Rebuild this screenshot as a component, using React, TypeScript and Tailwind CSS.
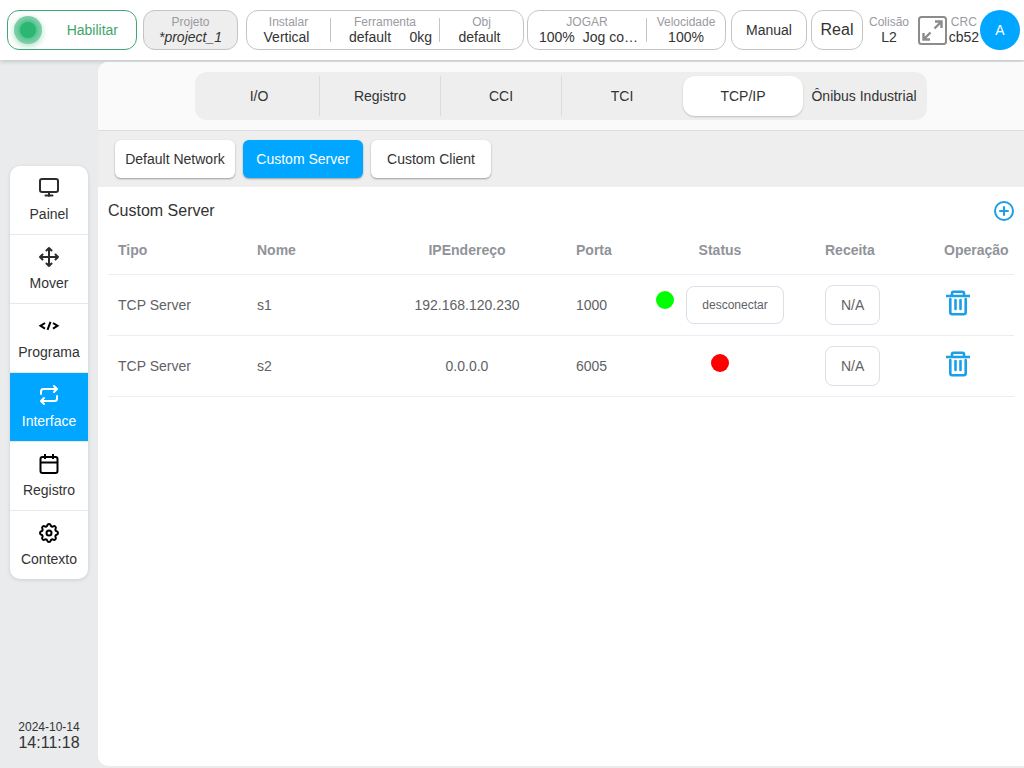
import clsx from 'clsx';

type MenuItem = {
  label: string;
  icon: React.ReactNode;
  active?: boolean;
};

type ServerRow = {
  type: string;
  name: string;
  ip: string;
  port: number;
  connected: boolean;
};

const menu: MenuItem[] = [
  { label: 'Painel', icon: <IconMonitor /> },
  { label: 'Mover', icon: <IconMove /> },
  { label: 'Programa', icon: <IconCode /> },
  { label: 'Interface', icon: <IconRepeat />, active: true },
  { label: 'Registro', icon: <IconCalendar /> },
  { label: 'Contexto', icon: <IconGear /> },
];

const tabs = ['I/O', 'Registro', 'CCI', 'TCI', 'TCP/IP', 'Ônibus Industrial'];
const networks = ['Default Network', 'Custom Server', 'Custom Client'];

const servers: ServerRow[] = [
  { type: 'TCP Server', name: 's1', ip: '192.168.120.230', port: 1000, connected: true },
  { type: 'TCP Server', name: 's2', ip: '0.0.0.0', port: 6005, connected: false },
];

export default function App() {
  return (
    <div className="flex min-h-screen flex-col bg-[#e9ebed] font-['Liberation_Sans',Arial,sans-serif] text-sm text-[#333]">
      <Header />

      <div className="flex flex-1 pt-0.5">
        <Sidebar />

        <main className="mb-0.5 flex min-w-0 flex-1 flex-col overflow-hidden rounded-l-[10px] bg-white">
          <Tabs active="TCP/IP" />
          <Networks active="Custom Server" />
          <Servers />
        </main>
      </div>
    </div>
  );
}

function Header() {
  return (
    <header className="flex h-15 items-center bg-white pr-1 pl-[7px] whitespace-nowrap shadow-[0_2px_4px_rgba(0,0,0,0.15)]">
      <button
        type="button"
        className="flex h-10 w-[130px] items-center justify-between rounded-xl border border-[#3fa877] pr-[18px] pl-1.5 text-[#3fa46b]"
      >
        <span className="flex size-7 items-center justify-center rounded-full bg-[#7fd0a8] shadow-[0_2px_6px_#2bb67366]">
          <span className="size-4 rounded-full bg-[#2bb673] shadow-[0_0_4px_2px_#2bb673aa]" />
        </span>
        Habilitar
      </button>

      <button
        type="button"
        className="ml-1.5 h-10 w-[95px] rounded-xl border border-[#c4c4c4] bg-[#eee]"
      >
        <Stat label="Projeto">
          <em>*project_1</em>
        </Stat>
      </button>

      <div className="ml-2 flex h-10 w-[278px] items-center rounded-xl border border-[#c4c4c4]">
        <Stat label="Instalar" className="w-[83px]">
          <span className="pr-1">Vertical</span>
        </Stat>
        <Divider />
        <Stat label="Ferramenta" className="w-[108px]">
          <span className="flex justify-between pr-[7px] pl-[18px]">
            <span>default</span>
            <span>0kg</span>
          </span>
        </Stat>
        <Divider />
        <Stat label="Obj" className="flex-1">
          <span className="pr-1">default</span>
        </Stat>
      </div>

      <div className="ml-[3px] flex h-10 w-[199px] items-center rounded-xl border border-[#c4c4c4]">
        <Stat label="JOGAR" className="w-[118px]">
          <span className="flex justify-between pr-2 pl-[11px]">
            <span>100%</span>
            <span>Jog co…</span>
          </span>
        </Stat>
        <Divider />
        <Stat label="Velocidade" className="flex-1">
          100%
        </Stat>
      </div>

      <button type="button" className="ml-[5px] h-10 w-19 rounded-xl border border-[#c4c4c4]">
        Manual
      </button>

      <button type="button" className="ml-1 h-10 w-13 rounded-xl border border-[#c4c4c4] text-base">
        Real
      </button>

      <Stat label="Colisão" className="ml-1.5">
        L2
      </Stat>

      <div className="ml-auto flex items-center gap-px">
        <button type="button" aria-label="Tela cheia">
          <IconExpand />
        </button>
        <Stat label="CRC" className="ml-px">
          cb52
        </Stat>
        <button type="button" className="size-10 rounded-full bg-[#00a6ff] text-sm text-white">
          A
        </button>
      </div>
    </header>
  );
}

function Divider() {
  return <div className="h-6 w-px bg-[#c4c4c4]" />;
}

type StatProps = {
  label: string;
  className?: string;
  children: React.ReactNode;
};

function Stat({ label, className, children }: StatProps) {
  return (
    <div className={clsx('text-center', className)}>
      <div className="text-xs leading-[14px] text-[#9a9a9f]">{label}</div>
      <div className="leading-4">{children}</div>
    </div>
  );
}

function Sidebar() {
  return (
    <aside className="flex w-[98px] shrink-0 flex-col items-center pt-26 pb-[17px]">
      <nav className="w-[78px] divide-y divide-[#e8e8ea] overflow-hidden rounded-[10px] bg-white shadow-[0_1px_4px_rgba(0,0,0,0.12)]">
        {menu.map(({ label, icon, active }) => (
          <a
            key={label}
            href="#"
            className={clsx(
              'flex h-[69px] flex-col items-center pt-2.5 last:h-17',
              active && 'bg-[#00a6ff] text-white',
            )}
          >
            <span className={clsx('flex h-6 items-center', !active && 'text-[#2c2c2c]')}>{icon}</span>
            <span className="mt-1 leading-5">{label}</span>
          </a>
        ))}
      </nav>

      <time dateTime="2024-10-14T14:11:18" className="mt-auto text-center">
        <div className="text-xs leading-4">2024-10-14</div>
        <div className="text-base leading-4">14:11:18</div>
      </time>
    </aside>
  );
}

function Tabs({ active }: { active: string }) {
  return (
    <div className="flex justify-center border-b border-[#dcdcdc] bg-[#fafafa] py-2.5">
      <div role="tablist" className="flex rounded-xl bg-[#eee] py-1 pr-[3px] pl-1">
        {tabs.map((tab, index) => (
          <div
            key={tab}
            className={clsx(
              'w-[121px] border-r last:w-30 last:border-0',
              index < 3 ? 'border-[#dcdcdc]' : 'border-transparent',
            )}
          >
            <button
              type="button"
              role="tab"
              aria-selected={tab === active}
              className={clsx(
                'h-10 w-full rounded-xl whitespace-nowrap',
                tab === active && 'bg-white shadow-[0_1px_2px_rgba(0,0,0,0.2)]',
              )}
            >
              {tab}
            </button>
          </div>
        ))}
      </div>
    </div>
  );
}

function Networks({ active }: { active: string }) {
  return (
    <div className="flex gap-2 bg-[#eee] px-[17px] py-[9px]">
      {networks.map((network) => (
        <button
          key={network}
          type="button"
          className={clsx(
            'h-[38px] w-30 rounded-md shadow-[0_1px_2px_rgba(0,0,0,0.35)]',
            network === active ? 'bg-[#00a6ff] text-white' : 'bg-white',
          )}
        >
          {network}
        </button>
      ))}
    </div>
  );
}

function Servers() {
  return (
    <section className="px-2.5 pt-3">
      <div className="flex items-center justify-between">
        <h1 className="text-base leading-6">Custom Server</h1>
        <button type="button" aria-label="Adicionar" className="text-[#1a9fe8]">
          <IconAdd />
        </button>
      </div>

      <table className="w-full table-fixed text-left text-[#606266]">
        <colgroup>
          <col className="w-[139px]" />
          <col className="w-[121px]" />
          <col className="w-[198px]" />
          <col className="w-[59px]" />
          <col className="w-[190px]" />
          <col className="w-[119px]" />
          <col className="w-[80px]" />
        </colgroup>
        <thead className="text-[#909399]">
          <tr className="h-[51px] border-b border-[#ebeef5] *:pt-1">
            <th className="pl-2.5">Tipo</th>
            <th className="pl-2.5">Nome</th>
            <th className="text-center">IPEndereço</th>
            <th className="pl-2.5">Porta</th>
            <th className="text-center">Status</th>
            <th className="pl-2.5">Receita</th>
            <th className="pl-2.5">Operação</th>
          </tr>
        </thead>
        <tbody>
          {servers.map((server) => (
            <ServerItem key={server.name} server={server} />
          ))}
        </tbody>
      </table>
    </section>
  );
}

function ServerItem({ server }: { server: ServerRow }) {
  return (
    <tr className="h-[61px] border-b border-[#ebeef5]">
      <td className="pl-2.5">{server.type}</td>
      <td className="pl-2.5">{server.name}</td>
      <td className="text-center">{server.ip}</td>
      <td className="pl-2.5">{server.port}</td>
      <td>
        <div className="flex items-baseline justify-center gap-3">
          <span
            className={clsx('size-[18px] rounded-full', server.connected ? 'bg-[#00ff00]' : 'mb-1.5 bg-[#ff0000]')}
          />
          {server.connected && (
            <button type="button" className="h-[38px] rounded-lg border border-[#dcdfe6] px-[15px] text-xs">
              desconectar
            </button>
          )}
        </div>
      </td>
      <td className="pl-2.5">
        <button type="button" className="block h-10 rounded-lg border border-[#dcdfe6] px-[15px]">
          N/A
        </button>
      </td>
      <td className="pl-3">
        <button type="button" aria-label="Remover" className="mb-1 block text-[#1a9fe8]">
          <IconTrash />
        </button>
      </td>
    </tr>
  );
}

function IconMonitor() {
  return (
    <svg width="22" height="22" viewBox="0 0 22 22" fill="none" stroke="currentColor" strokeWidth="2">
      <rect x="2" y="2" width="18" height="13" rx="2" />
      <path d="M11 15v4M7.500 18.500h7" strokeLinecap="round" />
    </svg>
  );
}

function IconMove() {
  return (
    <svg width="22" height="22" viewBox="0 0 22 22" fill="none" stroke="currentColor" strokeWidth="2">
      <path
        d="M11 2v18M2 11h18M8.500 4.500l2.500-2.500 2.500 2.500M8.500 17.500l2.500 2.500 2.500-2.500M4.500 8.500L2 11l2.500 2.500M17.500 8.500L20 11l-2.500 2.500"
        strokeLinecap="round"
        strokeLinejoin="round"
      />
    </svg>
  );
}

function IconCode() {
  return (
    <svg width="22" height="22" viewBox="0 0 22 22" fill="none" stroke="#000" strokeWidth="2">
      <path d="M7 8L2.500 10.800 7 13.600M15 8l4.500 2.800-4.500 2.800M12.500 6.800l-3 8" />
    </svg>
  );
}

function IconRepeat() {
  return (
    <svg width="24" height="24" viewBox="0 0 24 24" fill="none" stroke="currentColor" strokeWidth="2">
      <path
        d="M17 3l3 3-3 3M19.500 6H6.500A2.500 2.500 0 0 0 4 8.500V11M7 15l-3 3 3 3M4.500 18h13a2.500 2.500 0 0 0 2.500-2.500V13"
        strokeLinecap="round"
        strokeLinejoin="round"
      />
    </svg>
  );
}

function IconCalendar() {
  return (
    <svg width="22" height="22" viewBox="0 0 22 22" fill="none" stroke="#000" strokeWidth="2">
      <rect x="2.500" y="4" width="17" height="16" rx="2" />
      <path d="M2.500 9.500h17M7 1v5M15 1v5" />
    </svg>
  );
}

function IconGear() {
  return (
    <svg width="24" height="24" viewBox="0 0 24 24" fill="none" stroke="#000" strokeWidth="2">
      <circle cx="12" cy="12" r="2.500" />
      <path
        d="M10.325 4.317c.426 -1.756 2.924 -1.756 3.350 0a1.724 1.724 0 0 0 2.573 1.066c1.543 -.94 3.310 .826 2.370 2.370a1.724 1.724 0 0 0 1.065 2.572c1.756 .426 1.756 2.924 0 3.350a1.724 1.724 0 0 0 -1.066 2.573c.94 1.543 -.826 3.310 -2.370 2.370a1.724 1.724 0 0 0 -2.572 1.065c-.426 1.756 -2.924 1.756 -3.350 0a1.724 1.724 0 0 0 -2.573 -1.066c-1.543 .94 -3.310 -.826 -2.370 -2.370a1.724 1.724 0 0 0 -1.065 -2.572c-1.756 -.426 -1.756 -2.924 0 -3.350a1.724 1.724 0 0 0 1.066 -2.573c-.94 -1.543 .826 -3.310 2.370 -2.370c1 .608 2.296 .07 2.572 -1.065z"
        strokeLinejoin="round"
      />
    </svg>
  );
}

function IconExpand() {
  return (
    <svg width="29" height="29" viewBox="0 0 29 29" fill="none" stroke="#8c8c8c" strokeWidth="2">
      <rect x="1" y="1" width="27" height="27" rx="2.500" />
      <path d="M17 5.500H23.500V12M23 6L16.500 12.500M5.500 17V23.500H12M6 23L12.500 16.500" strokeWidth="2.400" />
    </svg>
  );
}

function IconAdd() {
  return (
    <svg width="20" height="20" viewBox="0 0 20 20" fill="none" stroke="currentColor" strokeWidth="2">
      <circle cx="10" cy="10" r="9" />
      <path d="M10 6v8M6 10h8" strokeLinecap="round" />
    </svg>
  );
}

function IconTrash() {
  return (
    <svg width="24" height="26" viewBox="0 0 24 26" fill="none" stroke="currentColor" strokeWidth="2.600">
      <path d="M0 6h24M6 5.500V3.300a1.500 1.500 0 0 1 1.500-1.500h9A1.500 1.500 0 0 1 18 3.300v2.200" />
      <path d="M4.300 9v13.200a2 2 0 0 0 2 2h11.400a2 2 0 0 0 2-2V9" strokeLinecap="round" />
      <path d="M9.500 10v9M14.500 10v9" strokeLinecap="round" />
    </svg>
  );
}
